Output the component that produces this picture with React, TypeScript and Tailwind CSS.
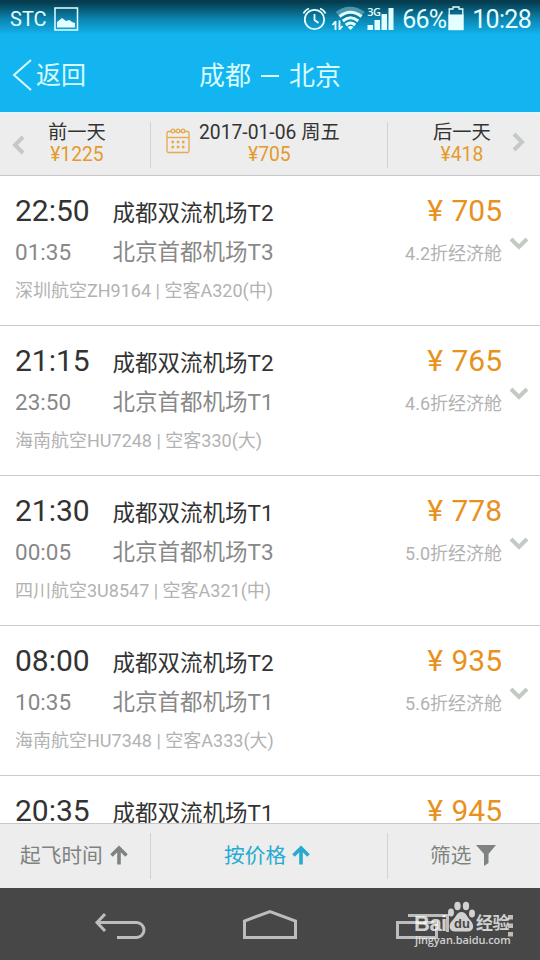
import { ReactNode } from "react";

type Flight = {
  depart: string;
  from: string;
  price: string;
  arrive?: string;
  to?: string;
  plane?: string;
  cabin?: string;
};

const flights: Flight[] = [
  { depart: "22:50", arrive: "01:35", from: "成都双流机场T2", to: "北京首都机场T3", plane: "深圳航空ZH9164 | 空客A320(中)", price: "705", cabin: "4.2折经济舱" },
  { depart: "21:15", arrive: "23:50", from: "成都双流机场T2", to: "北京首都机场T1", plane: "海南航空HU7248 | 空客330(大)", price: "765", cabin: "4.6折经济舱" },
  { depart: "21:30", arrive: "00:05", from: "成都双流机场T1", to: "北京首都机场T3", plane: "四川航空3U8547 | 空客A321(中)", price: "778", cabin: "5.0折经济舱" },
  { depart: "08:00", arrive: "10:35", from: "成都双流机场T2", to: "北京首都机场T1", plane: "海南航空HU7348 | 空客A333(大)", price: "935", cabin: "5.6折经济舱" },
  { depart: "20:35", from: "成都双流机场T1", price: "945" },
];

function StatusBar() {
  return (
    <div className="flex h-[37px] items-start bg-linear-to-b from-[#063c4e] from-5% via-[#0b83ad] via-50% to-[#12b5f0] to-95% pt-[6px] pr-[9px] pl-[10px] text-[#e4ffff]">
      <span className="w-[44px] text-[20px] leading-[27px]">STC</span>
      <svg width="25" height="26" viewBox="0 0 25 26">
        <rect x="1" y="2" width="22.5" height="22" fill="none" stroke="currentColor" strokeWidth="1.5" />
        <path d="M3 21.500V16L5 14.500L8 12L12 15L15.500 14L18 16L21 17V21.500Z" fill="currentColor" />
      </svg>
      <div className="ml-auto flex items-start">
        <svg width="25" height="26" viewBox="0 0 25 26" fill="none" stroke="currentColor" strokeWidth="1.8">
          <circle cx="12.500" cy="13.500" r="9.700" />
          <path d="M12.500 8v6l4 3M1.500 7.500Q3 4 7 2.500M23.500 7.500Q22 4 18 2.500" />
        </svg>
        <svg className="ml-[4px]" width="35" height="26" viewBox="0 0 35 26">
          <path d="M4.500 6Q19 -4.500 34 6L30.500 9.500Q19.500 1 8 9.500Z" fill="#4a97b0" />
          <g fill="none" stroke="currentColor" strokeWidth="3">
            <path d="M8.500 10.500Q19.500 2 30.500 10.500" />
            <path d="M11.800 15Q19.500 8.500 27.200 15" />
            <path d="M14.800 19Q19.500 15 24.200 19" />
          </g>
          <path d="M16.500 21Q19.500 19 22.500 21L19.500 24Z" fill="currentColor" />
          <path d="M4.500 24V15M1.500 19L4.500 15.500M8.500 14.500V24M8.500 23.500L11.500 20" stroke="currentColor" strokeWidth="1.900" fill="none" />
        </svg>
        <div className="relative ml-px h-[26px] w-[28px]">
          <span className="absolute top-[-1px] left-0 font-['Open_Sans'] text-[11px] leading-[14px] font-semibold tracking-[-0.6px]">3G</span>
          <svg width="28" height="26" viewBox="0 0 28 26" fill="currentColor">
            <path d="M.500 19h5.500v5H.500zM7.500 14h5.500v10H7.500zM14.500 8h5.500v16h-5.500zM21.500 2h5v22h-5z" />
          </svg>
        </div>
        <span className="ml-[7px] text-[25px] leading-[28px] tracking-[-0.8px]">66%</span>
        <svg className="ml-[2px]" width="16" height="26" viewBox="0 0 16 26">
          <path d="M1.200 23.500V3H5V1H11V3H14.800V23.500Z" fill="none" stroke="currentColor" strokeWidth="1.300" />
          <path d="M.500 8.500H15.500V24H.500Z" fill="currentColor" />
        </svg>
        <span className="ml-[8px] text-[25px] leading-[28px] tracking-[-0.7px]">10:28</span>
      </div>
    </div>
  );
}

function TitleBar() {
  return (
    <div className="grid h-[75px] grid-cols-[160px_1fr_160px] items-center bg-[#12b5f0] text-[#d8fcff]">
      <div className="flex items-center pl-[12px]">
        <svg width="21" height="34" viewBox="0 0 21 34" fill="none" stroke="currentColor" strokeWidth="2">
          <path d="M19 2L2 17L19 32" />
        </svg>
        <span className="mt-[2px] ml-[3px] text-[25px] leading-[34px]">返回</span>
      </div>
      <div className="mt-[2px] flex items-center justify-center gap-[10px] text-[26px] leading-[34px]">
        <span>成都</span>
        <span className="h-[2px] w-[18px] bg-current" />
        <span>北京</span>
      </div>
    </div>
  );
}

function Divider() {
  return <span className="h-[46px] w-px bg-[#d2d2d2]" />;
}

function Chevron({ className, d }: { className?: string; d: string }) {
  return (
    <svg className={className} width="20" height="20" viewBox="0 0 20 20" fill="none" stroke="#c3cac3" strokeWidth="4">
      <path d={d} />
    </svg>
  );
}

function DateCell({ label, price }: { label: string; price: string }) {
  return (
    <div className="-mt-[2px] text-center text-[19.3px] leading-[22px]">
      <div className="text-[#333]">{label}</div>
      <div className="text-[#e59a2c]">{price}</div>
    </div>
  );
}

function CalendarIcon() {
  return (
    <svg width="24" height="26" viewBox="0 0 24 26" fill="none" stroke="#eaa74b" strokeWidth="1.300">
      <rect x="1" y="3.500" width="22" height="21" rx="1.500" />
      <path d="M1 9.500H23" />
      <g fill="#ededed">
        <circle cx="7" cy="3" r="1.800" />
        <circle cx="12" cy="3" r="1.800" />
        <circle cx="17" cy="3" r="1.800" />
      </g>
      <path d="M5.500 14h2.500M10.800 14h2.500M16 14h2.500M5.500 19h2.500M10.800 19h2.500M16 19h2.500" strokeWidth="2.500" />
    </svg>
  );
}

function DateBar() {
  return (
    <div className="grid h-[64px] grid-cols-[150px_1px_236px_1px_1fr] items-center border-t-2 border-b border-t-[#e3f5f8] border-b-[#c8c8c8] bg-[#ededed]">
      <div className="flex items-center">
        <Chevron className="ml-[9px]" d="M14 2L6 10L14 18" />
        <div className="ml-[19px]">
          <DateCell label="前一天" price="¥1225" />
        </div>
      </div>
      <Divider />
      <div className="flex items-center">
        <div className="mt-[-7px] ml-[15px]">
          <CalendarIcon />
        </div>
        <div className="ml-[9px]">
          <DateCell label="2017-01-06 周五" price="¥705" />
        </div>
      </div>
      <Divider />
      <div className="flex items-center">
        <div className="ml-[45px]">
          <DateCell label="后一天" price="¥418" />
        </div>
        <Chevron className="mt-[-5px] ml-[17px]" d="M6 2L14 10L6 18" />
      </div>
    </div>
  );
}

function FlightRow({ flight }: { flight: Flight }) {
  return (
    <div className="flex h-[150px] shrink-0 border-b border-[#cbcbcb] pt-[20px] pl-[15px]">
      <div className="w-[487px]">
        <div className="grid h-[30px] grid-cols-[97.5px_1fr_auto] items-baseline">
          <span className="text-[30px] leading-[30px] text-[#333]">{flight.depart}</span>
          <span className="text-[22.5px] leading-[30px] text-[#333]">{flight.from}</span>
          <span className="text-[30px] leading-[30px] text-[#e8911c] [word-spacing:1px]">¥ {flight.price}</span>
        </div>
        {flight.arrive && (
          <>
            <div className="mt-[11px] grid h-[30px] grid-cols-[97.5px_1fr_auto] items-baseline">
              <span className="text-[22.5px] leading-[30px] text-[#888]">{flight.arrive}</span>
              <span className="text-[22.5px] leading-[30px] text-[#888]">{flight.to}</span>
              <span className="text-[18px] leading-[30px] text-[#b2b2b2]">{flight.cabin}</span>
            </div>
            <div className="mt-[9px] text-[18px] leading-[30px] text-[#b2b2b2]">{flight.plane}</div>
          </>
        )}
      </div>
      <Chevron className="mt-[37px] ml-[7px]" d="M2 6L10 14L18 6" />
    </div>
  );
}

function ArrowUp() {
  return (
    <svg className="mt-[-2px]" width="18" height="20" viewBox="0 0 18 20" fill="none" stroke="currentColor" strokeWidth="3.600">
      <path d="M9 19.500V3M1.500 10.500L9 3L16.500 10.500" />
    </svg>
  );
}

function SortItem({ children, className }: { children: ReactNode; className: string }) {
  return <div className={`flex items-center text-[20.7px] leading-[22px] ${className}`}>{children}</div>;
}

function SortBar() {
  return (
    <div className="grid h-[65px] grid-cols-[150px_1px_236px_1px_1fr] items-center border-t border-[#c8c8c8] bg-[#ededed]">
      <SortItem className="gap-[7px] pl-[20px] text-[#7f837f]">
        <span>起飞时间</span>
        <ArrowUp />
      </SortItem>
      <Divider />
      <SortItem className="gap-[6px] pl-[73px] text-[#26aad2]">
        <span>按价格</span>
        <ArrowUp />
      </SortItem>
      <Divider />
      <SortItem className="gap-[5px] pl-[42px] text-[#7f837f]">
        <span>筛选</span>
        <svg className="mt-[-1px]" width="20" height="21" viewBox="0 0 20 21" fill="currentColor">
          <path d="M0 0H20L12.500 9V18L8 21V9Z" />
        </svg>
      </SortItem>
    </div>
  );
}

function Watermark() {
  return (
    <div className="absolute top-[12px] left-[414px] h-[52px] w-[102px] text-white/75">
      <span className="absolute top-[12px] left-0 font-['Liberation_Sans'] text-[22px] leading-[24px] font-bold tracking-[-0.5px]">Bai</span>
      <svg className="absolute top-px left-[33px]" width="29" height="34" viewBox="0 0 29 34" fill="currentColor">
        <ellipse cx="4" cy="11.500" rx="3" ry="4" />
        <ellipse cx="10.500" cy="5" rx="3.200" ry="4.200" />
        <ellipse cx="19" cy="5" rx="3.200" ry="4.200" />
        <ellipse cx="25" cy="12.500" rx="3" ry="4" />
        <path d="M14.500 11C19 11 20 16 24 20C28 25 26 30.500 21 30.500C17 30.500 12 30.500 8 30.500C2 30.500 1 24 5 20C9 16 10 11 14.500 11Z" />
      </svg>
      <span className="absolute top-[16px] left-[40px] font-['Liberation_Sans'] text-[13px] leading-[16px] font-bold text-[#474747]">du</span>
      <span className="absolute top-[11px] left-[62px] text-[17px] leading-[24px] font-bold tracking-[-0.5px]">经验</span>
      <span className="absolute top-[33px] left-[1px] font-['Open_Sans'] text-[11px] leading-[14px] font-semibold tracking-[-0.1px] whitespace-nowrap">jingyan.baidu.com</span>
    </div>
  );
}

function NavBar() {
  return (
    <div className="relative h-[72px] bg-[#474747]">
      <div className="flex h-full items-start pt-[20px] pl-[93px]">
        <svg width="54" height="34" viewBox="0 0 54 34" fill="none" stroke="#bdbdbd" strokeWidth="3">
          <path d="M12 6L4 14.500L12 23M4 14.500H43.500A7.500 7.500 0 0 1 43.500 29.500H24" />
        </svg>
        <svg className="ml-[95px]" width="56" height="34" viewBox="0 0 56 34" fill="none" stroke="#bdbdbd" strokeWidth="3">
          <path d="M2.500 29.500V13L28 3.500L53.500 13V29.500Z" />
        </svg>
        <svg className="ml-[96px]" width="56" height="34" viewBox="0 0 56 34" fill="none" stroke="#bdbdbd" strokeWidth="3">
          <path d="M3.500 14.500H42.500V29.500H3.500ZM14 7.500H53.500V24" />
        </svg>
        <svg className="ml-[56px]" width="10" height="34" viewBox="0 0 10 34" fill="#bdbdbd">
          <path d="M2 7h5v4.500H2zM2 15.500h5V20H2zM2 24h5v4.500H2z" />
        </svg>
      </div>
      <Watermark />
    </div>
  );
}

export default function App() {
  return (
    <div className="flex h-[960px] w-[540px] flex-col overflow-hidden bg-white font-[Roboto,'Noto_Sans_CJK_SC',sans-serif]">
      <StatusBar />
      <TitleBar />
      <DateBar />
      <div className="flex min-h-0 flex-1 flex-col overflow-hidden">
        {flights.map((flight) => (
          <FlightRow key={flight.depart} flight={flight} />
        ))}
      </div>
      <SortBar />
      <NavBar />
    </div>
  );
}
